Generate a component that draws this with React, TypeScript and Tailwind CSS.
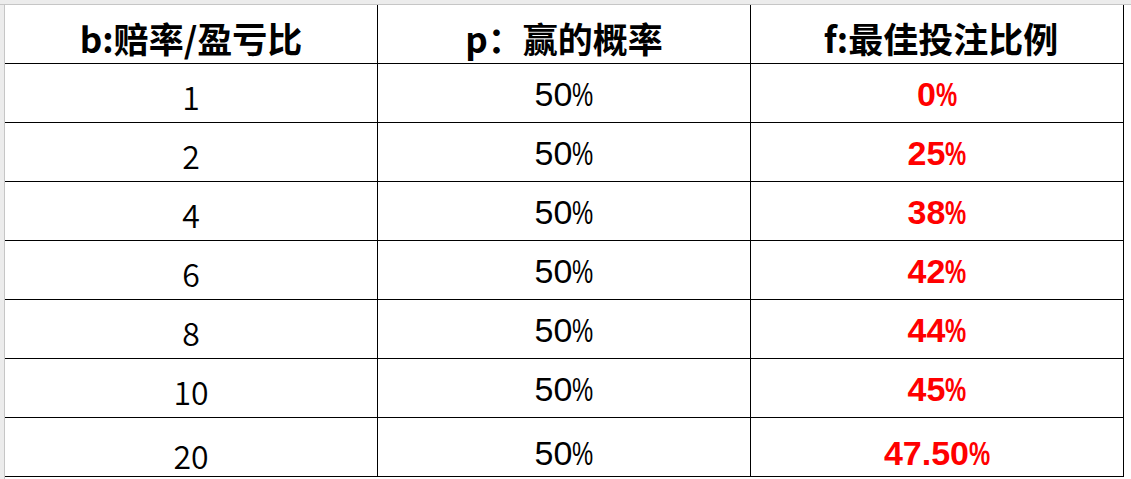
import React from 'react'

const rows: [string, string, string][] = [
  ['1', '50', '0'],
  ['2', '50', '25'],
  ['4', '50', '38'],
  ['6', '50', '42'],
  ['8', '50', '44'],
  ['10', '50', '45'],
  ['20', '50', '47.50'],
]

const cell = 'flex h-[59px] items-end justify-center border-b border-r border-black'
const cjk = '[font-family:"Noto_Sans_CJK_SC","Liberation_Sans",sans-serif]'
const arial = '[font-family:"Liberation_Sans","Noto_Sans_CJK_SC",sans-serif]'

// Narrow percent sign, like the spreadsheet font
function Pct({ children }: { children: React.ReactNode }) {
  return (
    <span>
      {children}
      <span className="inline-block w-[0.62em] origin-left scale-x-[0.7]">%</span>
    </span>
  )
}

export default function App() {
  return (
    <div className="flex h-[479px] w-[1131px] flex-col overflow-hidden bg-white">
      <div className="h-[5px] w-full shrink-0 border-b border-[#c6c6c6] bg-[#ececec]" />
      <div className="flex flex-1">
        <div className="w-[5px] shrink-0 border-r border-[#c6c6c6] bg-[#ececec]" />
        <div className="flex flex-col">
          <div className="grid grid-cols-[373px_373px_373px] text-black">
            <div className={`${cell} h-[58px] pb-[3px] text-[35px] font-bold leading-[44px] ${cjk}`}>b:赔率/盈亏比</div>
            <div className={`${cell} h-[58px] pb-[3px] text-[35px] font-bold leading-[44px] ${cjk}`}>p：赢的概率</div>
            <div className={`${cell} h-[58px] pb-[3px] pl-[8px] text-[35px] font-bold leading-[44px] ${cjk}`}>f:最佳投注比例</div>
            {rows.map(([b, p, f], i) => {
              const last = i === rows.length - 1
              return (
                <React.Fragment key={b}>
                  <div
                    className={`${cell} ${last ? 'pb-[1px]' : 'pb-[6px]'} text-[32px] font-[350] leading-[40px] ${cjk}`}
                  >
                    {b}
                  </div>
                  <div
                    className={`${cell} ${last ? 'pb-[3px]' : 'pb-[8px]'} text-[34px] leading-[40px] ${arial}`}
                  >
                    <Pct>{p}</Pct>
                  </div>
                  <div
                    className={`${cell} ${last ? 'pb-[3px]' : 'pb-[8px]'} text-[34px] font-bold leading-[40px] text-[#ff0000] ${arial}`}
                  >
                    <Pct>{f}</Pct>
                  </div>
                </React.Fragment>
              )
            })}
          </div>
        </div>
      </div>
    </div>
  )
}
